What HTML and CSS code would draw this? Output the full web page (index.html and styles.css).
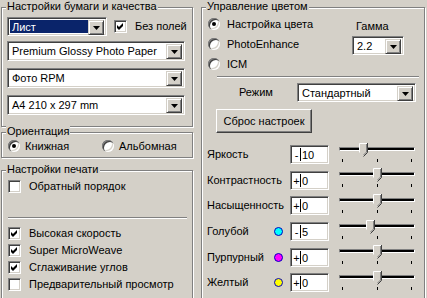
FILE: index.html
```html
<!DOCTYPE html>
<html lang="ru">
<head>
    <meta charset="utf-8">
    <title>Epson - Дополнительно</title>
    <link rel="stylesheet" href="styles.css">
</head>
<body>
    <div class="dialog">
        <div class="col-left">
            <div class="group group-paper">
                <span class="group-title">Настройки бумаги и качества</span>
                <div class="paper-top">
                    <div class="combo combo-source">
                        <span class="combo-text selected">Лист</span>
                        <span class="combo-btn"><svg width="7" height="4" viewBox="0 0 7 4"><path d="M0 0H7L3.5 4Z" fill="#000"/></svg></span>
                    </div>
                    <label class="check">
                        <span class="check-box"><svg width="7" height="7" viewBox="0 0 7 7"><path d="M0 2L2 4L6 0V3L2 7L0 5Z" fill="#000"/></svg></span>
                        Без полей
                    </label>
                </div>
                <div class="combo combo-wide">
                    <span class="combo-text">Premium Glossy Photo Paper</span>
                    <span class="combo-btn"><svg width="7" height="4" viewBox="0 0 7 4"><path d="M0 0H7L3.5 4Z" fill="#000"/></svg></span>
                </div>
                <div class="combo combo-wide">
                    <span class="combo-text">Фото RPM</span>
                    <span class="combo-btn"><svg width="7" height="4" viewBox="0 0 7 4"><path d="M0 0H7L3.5 4Z" fill="#000"/></svg></span>
                </div>
                <div class="combo combo-wide">
                    <span class="combo-text">A4 210 x 297 mm</span>
                    <span class="combo-btn"><svg width="7" height="4" viewBox="0 0 7 4"><path d="M0 0H7L3.5 4Z" fill="#000"/></svg></span>
                </div>
            </div>

            <div class="group group-orient">
                <span class="group-title">Ориентация</span>
                <label class="radio-item orient-portrait"><span class="radio checked"></span>Книжная</label>
                <label class="radio-item orient-landscape"><span class="radio"></span>Альбомная</label>
            </div>

            <div class="group group-print">
                <span class="group-title">Настройки печати</span>
                <label class="check check-row">
                    <span class="check-box"></span>
                    Обратный порядок
                </label>
                <div class="separator print-sep"></div>
                <label class="check check-row">
                    <span class="check-box"><svg width="7" height="7" viewBox="0 0 7 7"><path d="M0 2L2 4L6 0V3L2 7L0 5Z" fill="#000"/></svg></span>
                    Высокая скорость
                </label>
                <label class="check check-row">
                    <span class="check-box"><svg width="7" height="7" viewBox="0 0 7 7"><path d="M0 2L2 4L6 0V3L2 7L0 5Z" fill="#000"/></svg></span>
                    Super MicroWeave
                </label>
                <label class="check check-row">
                    <span class="check-box"><svg width="7" height="7" viewBox="0 0 7 7"><path d="M0 2L2 4L6 0V3L2 7L0 5Z" fill="#000"/></svg></span>
                    Сглаживание углов
                </label>
                <label class="check check-row">
                    <span class="check-box"></span>
                    Предварительный просмотр
                </label>
            </div>
        </div>

        <div class="group group-color">
            <span class="group-title">Управление цветом</span>
            <div class="color-top">
                <div class="color-modes">
                    <label class="radio-item mode-row"><span class="radio checked"></span>Настройка цвета</label>
                    <label class="radio-item mode-row"><span class="radio"></span>PhotoEnhance</label>
                    <label class="radio-item mode-row"><span class="radio"></span>ICM</label>
                </div>
                <div class="gamma">
                    <div class="gamma-label">Гамма</div>
                    <div class="combo combo-gamma">
                        <span class="combo-text">2.2</span>
                        <span class="combo-btn"><svg width="7" height="4" viewBox="0 0 7 4"><path d="M0 0H7L3.5 4Z" fill="#000"/></svg></span>
                    </div>
                </div>
            </div>
            <div class="separator color-sep"></div>
            <div class="mode-select">
                <span class="mode-label">Режим</span>
                <div class="combo combo-mode">
                    <span class="combo-text">Стандартный</span>
                    <span class="combo-btn"><svg width="7" height="4" viewBox="0 0 7 4"><path d="M0 0H7L3.5 4Z" fill="#000"/></svg></span>
                </div>
            </div>
            <div class="btn">Сброс настроек</div>

            <div class="adjust-list">
                <div class="adjust-row">
                    <span class="adjust-label">Яркость</span>
                    <span class="dot-cell"></span>
                    <span class="num"><span class="num-sign">-</span><span class="num-val">10</span></span>
                    <div class="slider">
                        <div class="track"></div>
                        <div class="ticks"><i></i><i></i><i></i></div>
                        <svg class="thumb" style="left: 20px" width="9" height="14" viewBox="0 0 9 14"><path d="M0.5 0.5H8.5V9.5L4.5 13.5L0.5 9.5Z" fill="#d4d0c8"/><path d="M0.5 9.5V0.5H8" stroke="#fff" fill="none"/><path d="M8.5 0V9.5L4.5 13.5" stroke="#404040" fill="none"/><path d="M7.5 1V9L4.5 12" stroke="#808080" fill="none"/></svg>
                    </div>
                </div>
                <div class="adjust-row">
                    <span class="adjust-label">Контрастность</span>
                    <span class="dot-cell"></span>
                    <span class="num"><span class="num-sign">+</span><span class="num-val">0</span></span>
                    <div class="slider">
                        <div class="track"></div>
                        <div class="ticks"><i></i><i></i><i></i></div>
                        <svg class="thumb" style="left: 34px" width="9" height="14" viewBox="0 0 9 14"><path d="M0.5 0.5H8.5V9.5L4.5 13.5L0.5 9.5Z" fill="#d4d0c8"/><path d="M0.5 9.5V0.5H8" stroke="#fff" fill="none"/><path d="M8.5 0V9.5L4.5 13.5" stroke="#404040" fill="none"/><path d="M7.5 1V9L4.5 12" stroke="#808080" fill="none"/></svg>
                    </div>
                </div>
                <div class="adjust-row">
                    <span class="adjust-label">Насыщенность</span>
                    <span class="dot-cell"></span>
                    <span class="num"><span class="num-sign">+</span><span class="num-val">0</span></span>
                    <div class="slider">
                        <div class="track"></div>
                        <div class="ticks"><i></i><i></i><i></i></div>
                        <svg class="thumb" style="left: 34px" width="9" height="14" viewBox="0 0 9 14"><path d="M0.5 0.5H8.5V9.5L4.5 13.5L0.5 9.5Z" fill="#d4d0c8"/><path d="M0.5 9.5V0.5H8" stroke="#fff" fill="none"/><path d="M8.5 0V9.5L4.5 13.5" stroke="#404040" fill="none"/><path d="M7.5 1V9L4.5 12" stroke="#808080" fill="none"/></svg>
                    </div>
                </div>
                <div class="adjust-row">
                    <span class="adjust-label">Голубой</span>
                    <span class="dot-cell"><span class="dot dot-cyan"></span></span>
                    <span class="num"><span class="num-sign">-</span><span class="num-val">5</span></span>
                    <div class="slider">
                        <div class="track"></div>
                        <div class="ticks"><i></i><i></i><i></i></div>
                        <svg class="thumb" style="left: 27px" width="9" height="14" viewBox="0 0 9 14"><path d="M0.5 0.5H8.5V9.5L4.5 13.5L0.5 9.5Z" fill="#d4d0c8"/><path d="M0.5 9.5V0.5H8" stroke="#fff" fill="none"/><path d="M8.5 0V9.5L4.5 13.5" stroke="#404040" fill="none"/><path d="M7.5 1V9L4.5 12" stroke="#808080" fill="none"/></svg>
                    </div>
                </div>
                <div class="adjust-row">
                    <span class="adjust-label">Пурпурный</span>
                    <span class="dot-cell"><span class="dot dot-magenta"></span></span>
                    <span class="num"><span class="num-sign">+</span><span class="num-val">0</span></span>
                    <div class="slider">
                        <div class="track"></div>
                        <div class="ticks"><i></i><i></i><i></i></div>
                        <svg class="thumb" style="left: 34px" width="9" height="14" viewBox="0 0 9 14"><path d="M0.5 0.5H8.5V9.5L4.5 13.5L0.5 9.5Z" fill="#d4d0c8"/><path d="M0.5 9.5V0.5H8" stroke="#fff" fill="none"/><path d="M8.5 0V9.5L4.5 13.5" stroke="#404040" fill="none"/><path d="M7.5 1V9L4.5 12" stroke="#808080" fill="none"/></svg>
                    </div>
                </div>
                <div class="adjust-row">
                    <span class="adjust-label">Желтый</span>
                    <span class="dot-cell"><span class="dot dot-yellow"></span></span>
                    <span class="num"><span class="num-sign">+</span><span class="num-val">0</span></span>
                    <div class="slider">
                        <div class="track"></div>
                        <div class="ticks"><i></i><i></i><i></i></div>
                        <svg class="thumb" style="left: 34px" width="9" height="14" viewBox="0 0 9 14"><path d="M0.5 0.5H8.5V9.5L4.5 13.5L0.5 9.5Z" fill="#d4d0c8"/><path d="M0.5 9.5V0.5H8" stroke="#fff" fill="none"/><path d="M8.5 0V9.5L4.5 13.5" stroke="#404040" fill="none"/><path d="M7.5 1V9L4.5 12" stroke="#808080" fill="none"/></svg>
                    </div>
                </div>
            </div>
        </div>
    </div>
</body>
</html>
```

FILE: styles.css
```css
* {
    box-sizing: border-box;
}

body {
    margin: 0px;
    background-color: #d4d0c8;
    font-family: "Liberation Sans", Arial, sans-serif;
    font-size: 11px;
    line-height: 13px;
    color: #000;
    overflow: hidden;
}

.dialog {
    display: flex;
    width: 427px;
    height: 298px;
    overflow: hidden;
}

.col-left {
    width: 192px;
    margin-left: 1px;
    display: flex;
    flex-direction: column;
    flex-shrink: 0;
}

/* etched group box */
.group {
    position: relative;
    border: 1px solid #808080;
    box-shadow: inset 1px 1px 0 #fff, 1px 1px 0 #fff;
    flex-shrink: 0;
}
.group-title {
    position: absolute;
    top: -8px;
    left: 4px;
    padding: 0 1px;
    background-color: #d4d0c8;
    white-space: nowrap;
}

.group-paper {
    margin-top: 7px;
    height: 120px;
    padding: 9px 0 0 5px;
}
.group-orient {
    margin-top: 5px;
    height: 26px;
    display: flex;
    align-items: center;
    padding: 2px 0 0 5px;
}
.group-print {
    margin-top: 12px;
    height: 140px;
    padding: 7px 0 0 6px;
}
.group-color {
    margin-top: 7px;
    margin-left: 8px;
    width: 224px;
    height: 300px;
    flex-shrink: 0;
}

/* combo box */
.combo {
    display: flex;
    height: 19px;
    padding: 2px;
    background-color: #fff;
    border: 1px solid;
    border-color: #808080 #fff #fff #808080;
    box-shadow: inset 1px 1px 0 #404040, inset -1px -1px 0 #d4d0c8;
}
.combo-text {
    flex: 1;
    padding-left: 2px;
    line-height: 15px;
    white-space: nowrap;
    overflow: hidden;
}
.combo-text.selected {
    background-color: #0a246a;
    color: #fff;
}
.combo-btn {
    width: 16px;
    height: 15px;
    display: flex;
    align-items: center;
    justify-content: center;
    background-color: #d4d0c8;
    border: 1px solid;
    border-color: #d4d0c8 #404040 #404040 #d4d0c8;
    box-shadow: inset 1px 1px 0 #fff, inset -1px -1px 0 #808080;
}
.combo-btn svg {
    display: block;
}

.paper-top {
    display: flex;
    align-items: center;
}
.combo-source {
    width: 100px;
}
.combo-wide {
    width: 178px;
    height: 20px;
    margin-top: 7px;
}
.paper-top + .combo-wide {
    margin-top: 5px;
}

/* check box */
.check {
    display: flex;
    align-items: center;
    white-space: nowrap;
}
.paper-top .check {
    margin-left: 7px;
}
.check-box {
    width: 13px;
    height: 13px;
    margin-right: 8px;
    display: flex;
    align-items: center;
    justify-content: center;
    background-color: #fff;
    border: 1px solid;
    border-color: #808080 #fff #fff #808080;
    box-shadow: inset 1px 1px 0 #404040, inset -1px -1px 0 #d4d0c8;
}
.check-box svg {
    display: block;
}
.check-row {
    height: 17px;
}

/* radio */
.radio-item {
    display: flex;
    align-items: center;
    white-space: nowrap;
}
.radio {
    position: relative;
    width: 12px;
    height: 12px;
    margin-right: 5px;
    border-radius: 50%;
    background-color: #fff;
    box-shadow: inset 1px 1px 0 #808080, inset 2px 2px 0 #404040, inset -1px -1px 0 #fff, inset -2px -2px 0 #d4d0c8;
}
.radio.checked::after {
    content: "";
    position: absolute;
    left: 4px;
    top: 4px;
    width: 4px;
    height: 4px;
    border-radius: 50%;
    background-color: #000;
}
.orient-portrait {
    width: 94px;
    margin-left: 1px;
}

.separator {
    height: 2px;
    border-top: 1px solid #808080;
    border-bottom: 1px solid #fff;
}
.print-sep {
    width: 179px;
    margin: 22px 0 6px 0;
}

/* colour management */
.color-top {
    display: flex;
    padding: 6px 0 0 6px;
}
.color-modes {
    width: 144px;
}
.mode-row {
    height: 20px;
}
.mode-row .radio {
    margin-right: 7px;
}
.gamma {
    padding-top: 6px;
}
.gamma-label {
    margin-left: 4px;
}
.combo-gamma {
    width: 52px;
    margin-top: 3px;
}

.color-sep {
    width: 202px;
    margin: 2px 0 0 15px;
}

.mode-select {
    display: flex;
    align-items: center;
    margin: 5px 0 0 37px;
}
.mode-label {
    width: 58px;
}
.combo-mode {
    width: 119px;
}

.btn {
    width: 96px;
    height: 24px;
    margin: 7px 0 0 14px;
    display: flex;
    align-items: center;
    justify-content: center;
    background-color: #d4d0c8;
    border: 1px solid;
    border-color: #fff #404040 #404040 #fff;
    box-shadow: inset -1px -1px 0 #808080;
}

.adjust-list {
    margin: 9px 0 0 5px;
}
.adjust-row {
    display: flex;
    align-items: center;
    height: 25.6px;
}
.adjust-label {
    width: 67px;
    white-space: nowrap;
}
.dot-cell {
    width: 16px;
    display: flex;
    align-items: center;
}
.dot {
    width: 9px;
    height: 9px;
    border-radius: 50%;
    border: 1px solid #0000c0;
}
.dot-cyan {
    background-color: #00ffff;
}
.dot-magenta {
    background-color: #ff00ff;
}
.dot-yellow {
    background-color: #ffff00;
}

.num {
    display: flex;
    width: 39px;
    height: 19px;
    padding: 2px;
    background-color: #fff;
    border: 1px solid;
    border-color: #808080 #fff #fff #808080;
    box-shadow: inset 1px 1px 0 #404040, inset -1px -1px 0 #d4d0c8;
    line-height: 15px;
}
.num-sign {
    width: 8px;
    text-align: center;
    border-right: 1px solid #000;
}
.num-val {
    padding-left: 1px;
}

/* trackbar */
.slider {
    position: relative;
    width: 76px;
    height: 22px;
    margin-left: 10px;
}
.track {
    margin-top: 3px;
    height: 4px;
    border: 1px solid;
    border-color: #808080 #fff #fff #808080;
    background-color: #000;
}
.ticks {
    display: flex;
    justify-content: space-between;
    margin: 8px 3px 0 3px;
}
.ticks i {
    display: block;
    width: 1px;
    height: 3px;
    background-color: #000;
}
.thumb {
    position: absolute;
    top: -1px;
}
```
